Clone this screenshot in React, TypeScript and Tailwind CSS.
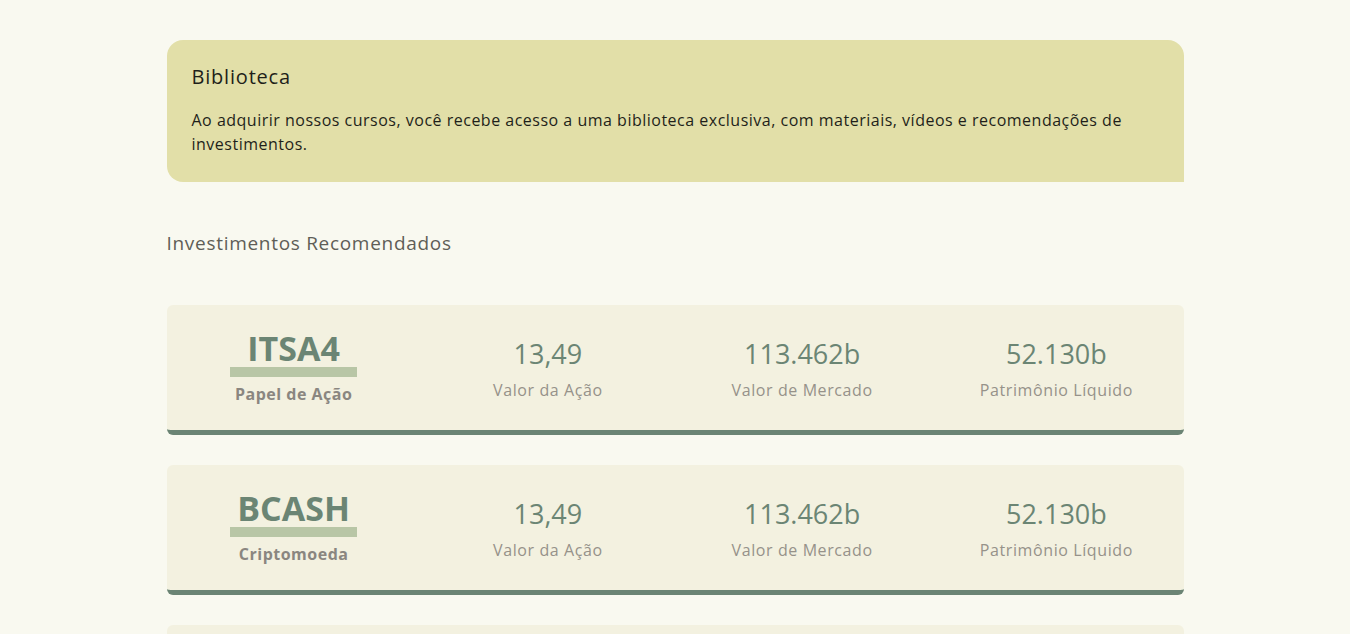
import React from "react";

const items = [
  { ticker: "ITSA4", kind: "Papel de Ação" },
  { ticker: "BCASH", kind: "Criptomoeda" },
  { ticker: "PETR4", kind: "Papel de Ação" },
];

function Stat({ value, label }: { value: string; label: string }) {
  return (
    <div className="flex flex-col items-center pt-[3px]">
      <div className="text-[27px] leading-[34px] text-[#6b8574]">{value}</div>
      <div className="text-[16px] leading-[22px] text-[#96928a] mt-[8px] tracking-[0.6px]">{label}</div>
    </div>
  );
}

export default function App() {
  return (
    <div
      className="min-h-[634px] bg-[#f9f9f0] pt-[40px] pb-[40px]"
      style={{ fontFamily: '"Open Sans", "Noto Sans", sans-serif' }}
    >
      <div className="w-[1017px] mx-auto">
        <section className="bg-[#e2dfa8] rounded-tl-2xl rounded-tr-2xl rounded-bl-2xl px-[25px] pt-[23px] pb-[26px]">
          <h2 className="text-[20px] leading-[28px] text-[#1f1f1a] tracking-[0.8px]">Biblioteca</h2>
          <p className="mt-[17px] text-[16px] leading-[24px] text-[#1f1f1a] tracking-[0.5px]">
            Ao adquirir nossos cursos, você recebe acesso a uma biblioteca exclusiva, com materiais, vídeos e
            recomendações de investimentos.
          </p>
        </section>

        <h3 className="mt-[47px] text-[19px] leading-[28px] text-[#5f5e57] tracking-[0.7px]">
          Investimentos Recomendados
        </h3>

        <div className="mt-[48px] flex flex-col gap-[30px]">
          {items.map((it) => (
            <div
              key={it.ticker}
              className="bg-[#f3f1e0] rounded-md border-b-[5px] border-[#6b8474] h-[130px] grid grid-cols-4 items-center"
            >
              <div className="flex flex-col items-center">
                <div className="text-[34px] leading-[36px] font-bold text-[#6b8574]">{it.ticker}</div>
                <div className="w-[127px] h-[10px] bg-[#b8c6a6] mt-[1px]" />
                <div className="text-[16px] leading-[22px] font-bold text-[#8a8680] mt-[6px] tracking-[0.5px]">
                  {it.kind}
                </div>
              </div>
              <Stat value="13,49" label="Valor da Ação" />
              <Stat value="113.462b" label="Valor de Mercado" />
              <Stat value="52.130b" label="Patrimônio Líquido" />
            </div>
          ))}
        </div>
      </div>
    </div>
  );
}
